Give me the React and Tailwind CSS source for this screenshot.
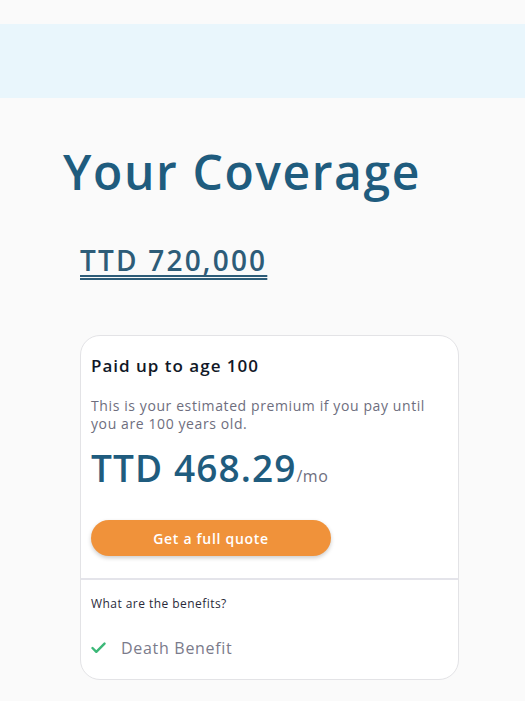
import React from "react";

export default function App() {
  const font = { fontFamily: '"Open Sans", "Noto Sans", sans-serif' };
  return (
    <div className="min-h-[701px] bg-[#fafafa] pt-6" style={font}>
      <div className="h-[74px] bg-[#e9f6fc]" />
      <div className="pl-[63px] pt-[44px]">
        <h1 className="text-[48px] leading-[60px] font-semibold text-[#1f5c7e] tracking-[1.6px]">
          Your Coverage
        </h1>
      </div>
      <div className="pl-[80px] pt-[40px]">
        <a className="text-[28px] leading-[36px] font-semibold text-[#2d5c78] tracking-[2.2px] underline decoration-double decoration-[2px] underline-offset-[4px]">
          TTD 720,000
        </a>
      </div>
      <div className="pl-[80px] pt-[57px] pb-[22px]">
        <div className="w-[379px] rounded-[20px] border border-[#e3e3e6] bg-white overflow-hidden">
          <div className="px-[10px] pt-[18px] pb-[22px]">
            <div className="text-[17px] leading-[24px] font-semibold text-[#111827] tracking-[1px]">
              Paid up to age 100
            </div>
            <p className="mt-[19px] text-[14px] leading-[18px] text-[#6e6e7e] tracking-[0.6px] pr-[20px]">
              This is your estimated premium if you pay until you are 100 years old.
            </p>
            <div className="mt-[11px] flex items-baseline">
              <span className="text-[37px] leading-[48px] font-semibold text-[#1f5c7e] tracking-[1.1px]">
                TTD 468.29
              </span>
              <span className="text-[16px] font-medium text-[#6e6e7e] tracking-[0.5px]">/mo</span>
            </div>
            <button className="mt-[28px] h-[36px] w-[240px] rounded-full bg-[#f0923a] text-[14px] font-semibold text-white tracking-[0.7px] shadow-[0_2px_4px_rgba(0,0,0,0.2)]">
              Get a full quote
            </button>
          </div>
          <div className="h-[2px] bg-[#e4e4ea]" />
          <div className="px-[10px] pt-[15px] pb-[20px]">
            <div className="text-[12px] leading-[18px] text-[#2a2a3a] tracking-[0.45px]">What are the benefits?</div>
            <div className="mt-[24px] flex items-center gap-[15px]">
              <svg width="15" height="12" viewBox="0 0 15 12" fill="none">
                <path d="M1.5 6L5.3 9.8L13.5 1.6" stroke="#3cb878" strokeWidth="2.4" strokeLinecap="round" strokeLinejoin="round" />
              </svg>
              <span className="text-[16px] leading-[22px] text-[#7b7b8b] tracking-[0.7px]">Death Benefit</span>
            </div>
          </div>
        </div>
      </div>
    </div>
  );
}
